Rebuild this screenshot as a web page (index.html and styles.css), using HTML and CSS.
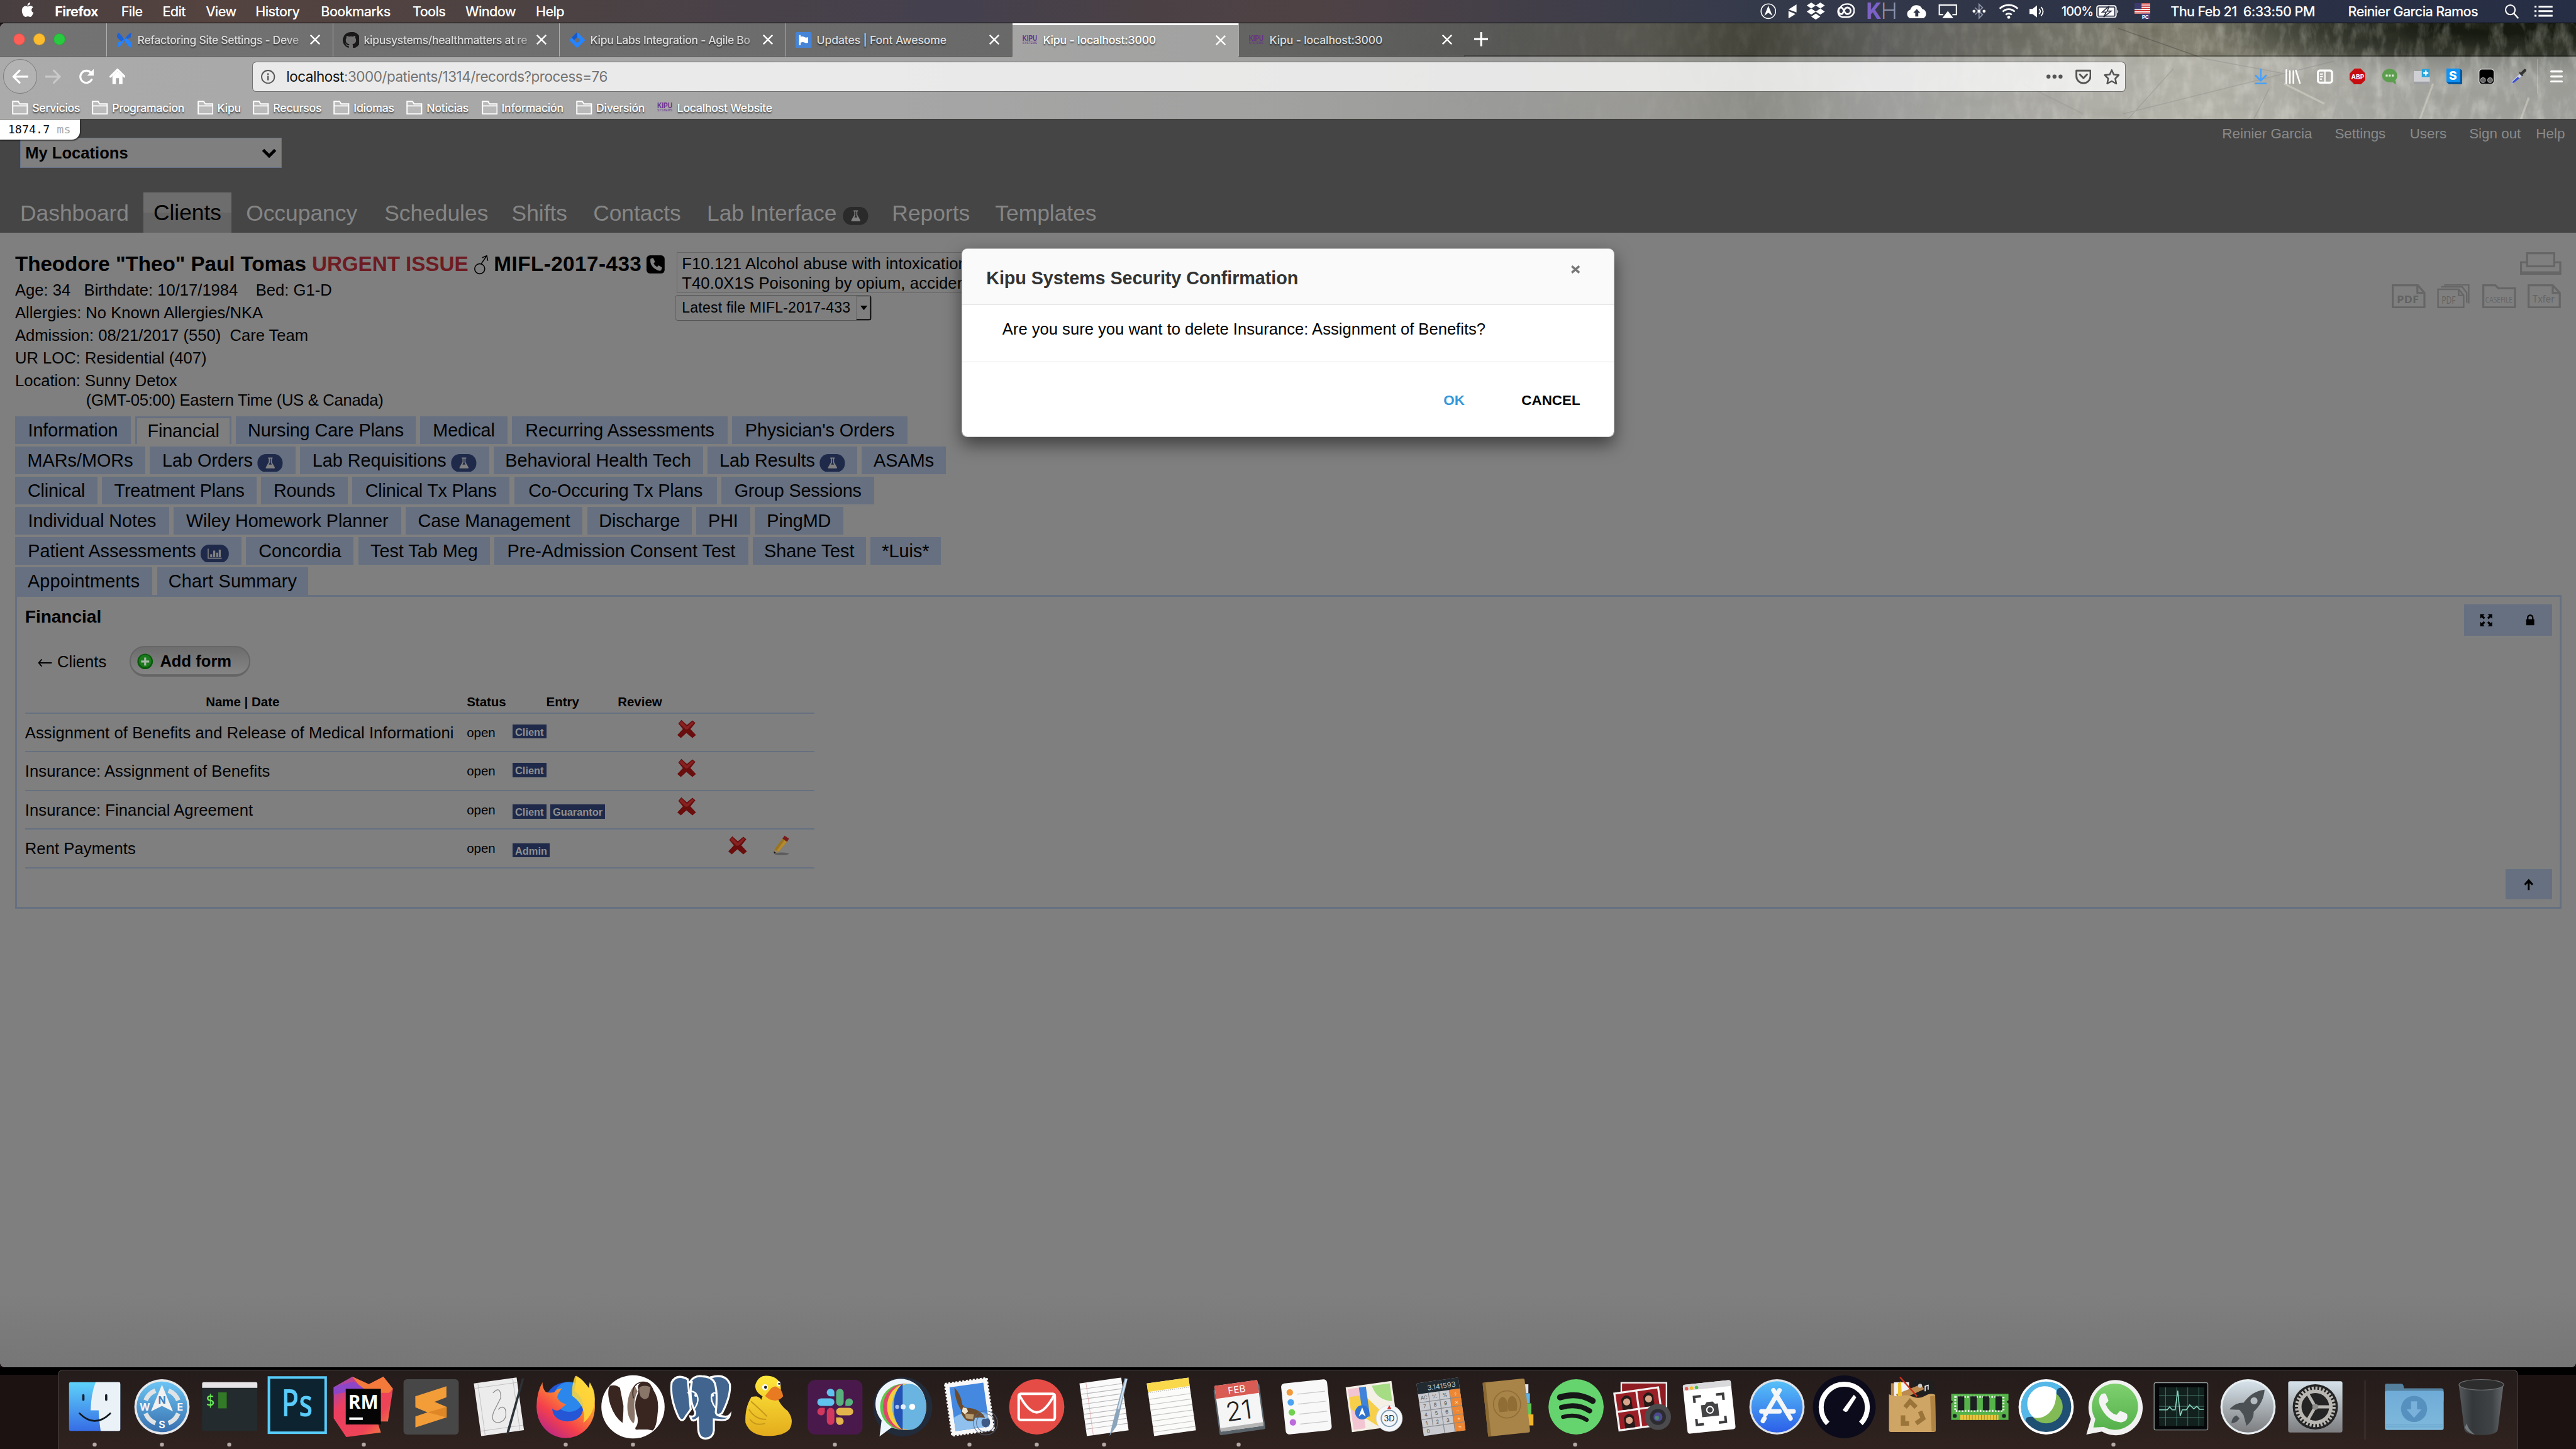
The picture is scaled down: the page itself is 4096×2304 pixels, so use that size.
FILE: index.html
```html
<!DOCTYPE html>
<html lang="en">
<head>
<meta charset="utf-8">
<title>Kipu - localhost:3000</title>
<link rel="stylesheet" href="styles.css">
</head>
<body>
<div class="menubar">
  <div class="menus">
    <svg class="apple" viewBox="0 0 24 30"><path d="M17 0c.3 3-2.500 6.400-5.500 6.300C11.200 3.300 14 .300 17 0zM12.300 8c1.400 0 2.800-1.300 5.200-1.300 2 0 4 1.100 5.200 2.900-4.500 2.600-3.800 8.700.9 10.500-1 3.400-3.700 8.600-6.500 8.600-1.900 0-2.500-1.200-4.700-1.200-2.200 0-3 1.200-4.700 1.200C4.300 28.700.5 22 .5 16.400.5 10.600 4.200 7 7.800 7c2 0 3.400 1 4.500 1z" fill="#fff"/></svg>
    <b>Firefox</b><span>File</span><span>Edit</span><span>View</span><span>History</span><span>Bookmarks</span><span>Tools</span><span>Window</span><span>Help</span>
  </div>
  <div class="status">
    <svg class="i32" viewBox="0 0 32 32"><circle cx="16" cy="16" r="14.500" fill="none" stroke="#fff" stroke-width="2"/><path d="M16 5l8 20-8-6-8 6z" fill="#fff"/></svg>
    <svg class="i18" viewBox="0 0 18 28"><path d="M17 0v16L1 10zM1 13l14 6L1 28z" fill="#fff"/></svg>
    <svg class="i38" viewBox="0 0 38 34"><path d="M10 0l9 6-9 6-9-6zM28 0l9 6-9 6-9-6zM10 12l9 6-9 6-9-6zM28 12l9 6-9 6-9-6zM19 22l9 6-9 6-9-6z" fill="#fff"/></svg>
    <svg class="i38" viewBox="0 0 38 30"><path d="M14 27a11 11 0 0 1-3-20C14 2 20 1 25 1a12 12 0 0 1 0 26z" fill="none" stroke="#fff" stroke-width="3"/><path d="M24 21c-6 0-7-14-13-13-6 2-6 13 2 13 4 0 4-13 11-13 9 0 9 13 0 13" fill="none" stroke="#fff" stroke-width="3.500"/></svg>
    <span class="kh"><b>K</b><i>H</i></span>
    <svg class="cloud" viewBox="0 0 42 28"><path d="M10 28a9 9 0 0 1-2-17.500A13 13 0 0 1 32 9a10 10 0 0 1 1 19z" fill="#fff"/><path d="M21 9l7 8h-4v7h-6v-7h-4z" fill="#31374b"/></svg>
    <svg class="i38" viewBox="0 0 38 28"><path d="M10 21H2V2h34v19h-8" fill="none" stroke="#fff" stroke-width="2.500"/><path d="M19 14l11 14H8z" fill="#fff"/></svg>
    <svg class="i32" viewBox="0 0 32 32"><path d="M8 9l15 14-7 7V2l7 7L8 23" fill="none" stroke="#8d93a5" stroke-width="2.200"/><circle cx="6" cy="16" r="3" fill="#fff"/><circle cx="16" cy="16" r="3" fill="#fff"/><circle cx="26" cy="16" r="3" fill="#fff"/></svg>
    <svg class="i40" viewBox="0 0 40 30"><path d="M2 10a26 26 0 0 1 36 0M8 16a17 17 0 0 1 24 0M14 22a9 9 0 0 1 12 0" fill="none" stroke="#fff" stroke-width="3.500"/><circle cx="20" cy="27" r="3" fill="#fff"/></svg>
    <svg class="i28" viewBox="0 0 28 26"><path d="M0 8h6l9-7v24l-9-7H0z" fill="#fff"/><path d="M19 8q5 5 0 10M23 4q8 9 0 18" fill="none" stroke="#fff" stroke-width="2.200"/></svg>
    <span class="pct">100%</span>
    <svg class="batt" viewBox="0 0 46 26"><rect x="1.500" y="1.500" width="38" height="23" rx="4" fill="none" stroke="#fff" stroke-width="2.500"/><rect x="5" y="5" width="31" height="16" fill="#fff"/><path d="M26 2L12 14h8l-5 10 15-12h-8z" fill="#fff" stroke="#2c3245" stroke-width="2"/><path d="M42 9q4 4 0 8z" fill="#fff"/></svg>
    <svg class="i32" viewBox="0 0 32 32"><path d="M0 0h32v21H0z" fill="#fff"/><path d="M0 1.500h32M0 6h32M0 10.500h32M0 15h32M0 19.500h32" stroke="#c8302e" stroke-width="2.400"/><path d="M0 0h14v12H0z" fill="#3c3b6e"/><path d="M14 21h18v11H14z" fill="#443f80"/><text x="15" y="31" font-size="10" font-weight="700" fill="#fff" font-family="Inter, sans-serif">PC</text></svg>
    <span>Thu Feb 21&nbsp; 6:33:50 PM</span><span class="user">Reinier Garcia Ramos</span>
    <svg class="i30" viewBox="0 0 30 30"><circle cx="12" cy="12" r="9.500" fill="none" stroke="#fff" stroke-width="2.600"/><path d="M19 19l9 10" stroke="#fff" stroke-width="3"/></svg>
    <svg class="i36" viewBox="0 0 36 22"><path d="M8 2h28M8 11h28M8 20h28" stroke="#fff" stroke-width="3.600"/><path d="M0 2h4M0 11h4M0 20h4" stroke="#fff" stroke-width="3.600"/></svg>
  </div>
</div>

<div class="window">
  <div class="chrome">
    <svg class="scratches" preserveAspectRatio="none" viewBox="0 0 2400 192">
      <defs>
        <filter id="grain" x="0" y="0" width="1" height="1"><feTurbulence type="fractalNoise" baseFrequency="0.05 0.02" numOctaves="5" seed="11"/><feColorMatrix values="0 0 0 0 .82  0 0 0 0 .81  0 0 0 0 .72  2.200 0 0 0 -.95"/></filter>
        <filter id="soot" x="0" y="0" width="1" height="1"><feTurbulence type="fractalNoise" baseFrequency="0.012 0.03" numOctaves="5" seed="4"/><feColorMatrix values="0 0 0 0 .08  0 0 0 0 .08  0 0 0 0 .05  2.200 0 0 0 -1"/></filter>
        <linearGradient id="fadeIn"><stop offset="0" stop-color="#000"/><stop offset=".45" stop-color="#333"/><stop offset=".65" stop-color="#888"/><stop offset="1" stop-color="#999"/></linearGradient>
        <mask id="edge"><rect width="2400" height="192" fill="url(#fadeIn)"/></mask>
      </defs>
      <g mask="url(#edge)"><rect width="2400" height="192" filter="url(#grain)" opacity=".55"/><rect width="2400" height="192" filter="url(#soot)" opacity=".6"/>
      <path d="M1490 10l170 60 160 30M1500 180l180-45 240-60M1300 120l120 60M1760 190l30-60M1600 90l-90 100" fill="none" stroke="#222" stroke-opacity=".5" stroke-width="2"/><path d="M2090 190l26-70M2290 192l16-44M1900 160l-80-40" fill="none" stroke="#e8e4cc" stroke-opacity=".6" stroke-width="4"/></g>
    </svg>
    <div class="tabstrip">
      <div class="lights"><i class="red"></i><i class="amber"></i><i class="green"></i></div>
      <div class="tab"><svg class="i32" viewBox="0 0 32 32"><path d="M3 1q6 2 13 15l-4 4Q2 12 1 9zM30 1L28 12q-6 0-14 8l2-4q6-12 14-15z" fill="#1d62d8"/><path d="M29 31q-6-2-13-15l4-4q10 8 11 11zM2 31l2-11q6 0 14-8l-2 4Q10 28 2 31z" fill="#2684ff"/></svg><span class="fade">Refactoring Site Settings - Deve</span><svg class="x" viewBox="0 0 20 20"><path d="M1 1l18 18M19 1L1 19"/></svg></div>
      <div class="tab"><svg class="i32" viewBox="0 0 32 32"><path d="M16 0a16 16 0 0 0-5 31.200c.8.100 1-.3 1-.8v-3c-4.500 1-5.400-2-5.400-2-.7-1.800-2-2.500-2-2.500 1.500-.4 2.800 1 3.200 1.800 1.400 2.400 3.600 1.700 4.500 1.300.1-1 .5-1.700 1-2.100-3.600-.4-7.300-1.800-7.300-8 0-1.700.6-3.200 1.600-4.300-.2-.4-.7-2 .2-4.200 0 0 1.300-.4 4.400 1.600a15 15 0 0 1 8 0c3-2 4.400-1.600 4.400-1.600.9 2.200.3 3.800.2 4.200 1 1.100 1.600 2.600 1.600 4.300 0 6.200-3.700 7.600-7.300 8 .6.500 1.100 1.500 1.100 3v4.400c0 .5.300.9 1 .8A16 16 0 0 0 16 0z" fill="#191717"/></svg><span class="fade">kipusystems/healthmatters at re</span><svg class="x" viewBox="0 0 20 20"><path d="M1 1l18 18M19 1L1 19"/></svg></div>
      <div class="tab"><svg class="i32" viewBox="0 0 32 32"><path d="M16 0l16 16-16 16L0 16zM16 10l-6 6 6 6 6-6z" fill="#2684ff" fill-rule="evenodd"/><path d="M16 0v10l-6 6-5-5z" fill="#1558cc"/></svg><span class="fade">Kipu Labs Integration - Agile Bo</span><svg class="x" viewBox="0 0 20 20"><path d="M1 1l18 18M19 1L1 19"/></svg></div>
      <div class="tab"><svg class="i32" viewBox="0 0 32 32"><rect width="32" height="32" rx="3" fill="#4684d8"/><path d="M7 6h3v20H7zM10 9q5-1 8 1t7 0v11q-4 2-7 0t-8 0z" fill="#fff"/></svg><span>Updates | Font Awesome</span><svg class="x" viewBox="0 0 20 20"><path d="M1 1l18 18M19 1L1 19"/></svg></div>
      <div class="tab active"><svg class="i32 kipu" viewBox="0 0 32 32"><text x="1" y="17" textLength="29" lengthAdjust="spacingAndGlyphs" class="k1">KIPU</text><text x="1" y="24" textLength="29" lengthAdjust="spacingAndGlyphs" class="k2">SYSTEMS</text></svg><span>Kipu - localhost:3000</span><svg class="x" viewBox="0 0 20 20"><path d="M1 1l18 18M19 1L1 19"/></svg></div>
      <div class="tab"><svg class="i32 kipu" viewBox="0 0 32 32"><text x="1" y="17" textLength="29" lengthAdjust="spacingAndGlyphs" class="k1">KIPU</text><text x="1" y="24" textLength="29" lengthAdjust="spacingAndGlyphs" class="k2">SYSTEMS</text></svg><span>Kipu - localhost:3000</span><svg class="x" viewBox="0 0 20 20"><path d="M1 1l18 18M19 1L1 19"/></svg></div>
      <svg class="plus" viewBox="0 0 28 28"><path d="M14 0v28M0 14h28" stroke="#fff" stroke-width="4"/></svg>
    </div>
    <div class="toolbar">
      <div class="back"><svg class="i32" viewBox="0 0 32 32"><path d="M31 16H3M15 4L3 16l12 12" fill="none" stroke="#fff" stroke-width="4" stroke-linecap="round" stroke-linejoin="round"/></svg></div>
      <svg class="i32 fwd" viewBox="0 0 32 32"><path d="M1 16h28M17 4l12 12-12 12" fill="none" stroke="#c9c9c9" stroke-width="4" stroke-linecap="round" stroke-linejoin="round"/></svg>
      <svg class="i32 reload" viewBox="0 0 32 32"><path d="M26 22a12 12 0 1 1-1-13" fill="none" stroke="#fff" stroke-width="4" stroke-linecap="round"/><path d="M30 1v13H17z" fill="#fff"/></svg>
      <svg class="i32 home" viewBox="0 0 32 32"><path d="M2 16L16 2l14 14" fill="none" stroke="#fff" stroke-width="4" stroke-linecap="round" stroke-linejoin="round"/><path d="M6 15L16 5l10 10v16H6z" fill="#fff"/><path d="M13 31V19h6v12" fill="#a6a6a6"/></svg>
      <div class="url">
        <svg class="i28" viewBox="0 0 28 28"><circle cx="14" cy="14" r="12.700" fill="none" stroke="#555" stroke-width="2.400"/><path d="M14 12v9M14 7v3" stroke="#555" stroke-width="2.800"/></svg>
        <span>localhost<em>:3000/patients/1314/records?process=76</em></span>
        <svg class="i32 dots" viewBox="0 0 32 32"><circle cx="4" cy="16" r="4"/><circle cx="16" cy="16" r="4"/><circle cx="28" cy="16" r="4"/></svg>
        <svg class="i32 pocket" viewBox="0 0 32 32"><path d="M2 4h28v11a14 14 0 0 1-28 0zM9 12l7 7 7-7" fill="none" stroke="#555" stroke-width="3.600" stroke-linejoin="round" stroke-linecap="round"/></svg>
        <svg class="i32 star" viewBox="0 0 32 32"><path d="M16 3l4 9 10 1-7 7 2 10-9-5-9 5 2-10-7-7 10-1z" fill="none" stroke="#555" stroke-width="3.200" stroke-linejoin="round"/></svg>
      </div>
      <div class="addons">
        <svg class="i32" viewBox="0 0 32 32"><path d="M16 1v22M6 14l10 10 10-10" fill="none" stroke="#45a1ff" stroke-width="3.400" stroke-linecap="round" stroke-linejoin="round"/><path d="M6 30h20" stroke="#45a1ff" stroke-width="4" stroke-linecap="round"/></svg>
        <svg class="i32" viewBox="0 0 32 32"><path d="M3 3v26M10 5v24M17 5v24M22 4l8 25" stroke="#fff" stroke-width="3.200" stroke-linecap="round"/></svg>
        <svg class="i32" viewBox="0 0 32 32"><rect x="2" y="4" width="28" height="24" rx="4" fill="none" stroke="#fff" stroke-width="4"/><path d="M16 4v24M6 11h6M6 16h6M6 21h4" stroke="#fff" stroke-width="2.500"/></svg>
        <svg class="i32" viewBox="0 0 32 32"><path d="M10 0h12l10 10v12L22 32H10L0 22V10z" fill="#c70d10"/><text x="3" y="21" textLength="26" lengthAdjust="spacingAndGlyphs" font-size="13" font-weight="700" fill="#fff" font-family="Inter, sans-serif">ABP</text></svg>
        <svg class="i32" viewBox="0 0 32 32"><ellipse cx="16" cy="14" rx="15" ry="13.500" fill="#5b9e4d"/><path d="M18 24h10v8z" fill="#5b9e4d"/><path d="M8 14h4M14 14h4M20 14h4" stroke="#dfe8da" stroke-width="4"/></svg>
        <svg class="i32" viewBox="0 0 32 32"><path d="M0 5h32v27H0z" fill="#cfd0d4"/><path d="M0 26h32v6H0z" fill="#9fa0a6"/><path d="M16 1h16v16H16z" fill="#2ba3dc"/><path d="M24 4v10M19 9h10" stroke="#fff" stroke-width="3"/></svg>
        <svg class="i32" viewBox="0 0 32 32"><path d="M0 0h26l6 4v28H6l-6-5z" fill="#0057a0"/><path d="M0 0h27v27H0z" fill="#0f93f5"/><text x="5" y="22" font-size="24" font-weight="800" fill="#fff" font-family="Inter, sans-serif">S</text></svg>
        <svg class="i32" viewBox="0 0 32 32"><rect x="1" y="1" width="30" height="30" rx="6" fill="#000" stroke="#ddd" stroke-width="1.500"/><circle cx="9" cy="23" r="5" fill="#666" stroke="#ccc"/><circle cx="23" cy="23" r="5" fill="#666" stroke="#ccc"/></svg>
        <svg class="i32" viewBox="0 0 32 32"><path d="M20 8l7-7q5-1 4 4l-7 7 1 3-4-1-4-5 1-3z" fill="#333"/><path d="M18 11l4 4L7 28l-5 2 2-6z" fill="#c9d2ee"/><path d="M14 17l4 2-11 9-4 1 2-4z" fill="#3c4fd0"/></svg>
      </div>
      <i class="bar"></i>
      <svg class="burger" viewBox="0 0 25 24"><path d="M2 2h21M2 12h21M2 22h21" stroke="#fff" stroke-width="4" stroke-linecap="round"/></svg>
    </div>
    <div class="bookmarks">
      <span><svg class="i32" viewBox="0 0 32 28"><path d="M1.500 26.500v-25h11l3 5h15v20zM1.500 10.500h29" class="fold"/></svg>Servicios</span>
      <span><svg class="i32" viewBox="0 0 32 28"><path d="M1.500 26.500v-25h11l3 5h15v20zM1.500 10.500h29" class="fold"/></svg>Programacion</span>
      <span><svg class="i32" viewBox="0 0 32 28"><path d="M1.500 26.500v-25h11l3 5h15v20zM1.500 10.500h29" class="fold"/></svg>Kipu</span>
      <span><svg class="i32" viewBox="0 0 32 28"><path d="M1.500 26.500v-25h11l3 5h15v20zM1.500 10.500h29" class="fold"/></svg>Recursos</span>
      <span><svg class="i32" viewBox="0 0 32 28"><path d="M1.500 26.500v-25h11l3 5h15v20zM1.500 10.500h29" class="fold"/></svg>Idiomas</span>
      <span><svg class="i32" viewBox="0 0 32 28"><path d="M1.500 26.500v-25h11l3 5h15v20zM1.500 10.500h29" class="fold"/></svg>Noticias</span>
      <span><svg class="i32" viewBox="0 0 32 28"><path d="M1.500 26.500v-25h11l3 5h15v20zM1.500 10.500h29" class="fold"/></svg>Información</span>
      <span><svg class="i32" viewBox="0 0 32 28"><path d="M1.500 26.500v-25h11l3 5h15v20zM1.500 10.500h29" class="fold"/></svg>Diversión</span>
      <span><svg class="i32 kipu" viewBox="0 0 32 32"><text x="0" y="17" textLength="30" lengthAdjust="spacingAndGlyphs" class="k1">KIPU</text><text x="0" y="24" textLength="30" lengthAdjust="spacingAndGlyphs" class="k2">SYSTEMS</text></svg>Localhost Website</span>
    </div>
  </div>

  <div class="page">
    <div class="profiler">1874.7 <span>ms</span></div>
    <header class="masthead">
      <div class="locations">My Locations<svg class="chev" viewBox="0 0 30 19"><path d="M3 3l12 12L27 3" fill="none" stroke="#000" stroke-width="6"/></svg></div>
      <div class="account"><span>Reinier Garcia</span><span>Settings</span><span>Users</span><span>Sign out</span><span>Help</span></div>
      <nav class="nav"><span>Dashboard</span><span class="on">Clients</span><span>Occupancy</span><span>Schedules</span><span>Shifts</span><span>Contacts</span><span>Lab Interface<svg class="pill dark" viewBox="0 0 50 36"><rect width="50" height="36" rx="17" fill="#2a2a2a"/><path d="M21 7h9v2h-1.500v7l6 10.500q.5 2-1.500 2H18q-2 0-1.500-2l6-10.500V9H21z" fill="#808080"/><path d="M24.500 9h2v8l2 4h-6l2-4z" fill="#2a2a2a"/></svg></span><span>Reports</span><span>Templates</span></nav>
    </header>

    <section class="patient">
      <div class="facts">
        <h1><span class="name">Theodore "Theo" Paul Tomas </span><em>URGENT ISSUE</em><svg class="mars" viewBox="0 0 28 40"><circle cx="11" cy="28" r="10" fill="none" stroke="#000" stroke-width="2"/><path d="M14 18L25 2M16 6l9-4 2 10" fill="none" stroke="#000" stroke-width="2"/></svg><span class="mr">MIFL-2017-433</span><svg class="phone" viewBox="0 0 36 36"><rect width="36" height="36" rx="7"/><path d="M8 7l5-2 4 8-3 3q2 5 7 7l3-3 7 4-2 6q-5 2-12-3T8 15q-1-5 0-8z" fill="#7f7f7f"/></svg></h1>
        <p>Age: 34 &nbsp; Birthdate: 10/17/1984 &nbsp;&nbsp; Bed: G1-D</p>
        <p>Allergies: No Known Allergies/NKA</p>
        <p>Admission: 08/21/2017 (550) &nbsp;Care Team</p>
        <p class="ur">UR LOC: Residential (407)</p>
        <p>Location: Sunny Detox</p>
        <p class="tz">(GMT-05:00) Eastern Time (US &amp; Canada)</p>
      </div>
      <div class="codes">
        <div class="diag">F10.121 Alcohol abuse with intoxication<br>T40.0X1S Poisoning by opium, accidental</div>
        <div class="files"><span>Latest file MIFL-2017-433</span><i><svg viewBox="0 0 14 9"><path d="M0 0h14L7 9z"/></svg></i></div>
      </div>
      <div class="prints">
        <svg class="printer" viewBox="0 0 82 45"><path d="M14 2h54v26H14zM14 20H2v23h78V20H68" fill="none" stroke="#666" stroke-width="4"/><path d="M2 38h78v5H2z" fill="#666"/></svg>
        <div class="docs">
          <svg viewBox="0 0 67 48"><path d="M2 2h50l13 15v29H2zM51 2v15h14" fill="none" stroke="#666" stroke-width="4"/><text x="10" y="38" class="dt" textLength="44" lengthAdjust="spacingAndGlyphs" font-weight="700">PDF</text></svg>
          <svg viewBox="0 0 67 48"><path d="M2 10h41l10 12v24H2zM43 10v12h10M8 5h42l9 12v20M14 1h49v37" fill="none" stroke="#666" stroke-width="3"/><text x="9" y="39" class="dt" textLength="28" lengthAdjust="spacingAndGlyphs">PDF</text></svg>
          <svg viewBox="0 0 67 48"><path d="M2 46V2h24l6 6h33v38z" fill="none" stroke="#666" stroke-width="4"/><text x="6" y="36" class="dt sm" textLength="54" lengthAdjust="spacingAndGlyphs">CASEFILE</text></svg>
          <svg viewBox="0 0 67 48"><path d="M2 2h48l14 15v29H2zM50 2v15h14" fill="none" stroke="#666" stroke-width="4"/><text x="10" y="36" class="dt" textLength="44" lengthAdjust="spacingAndGlyphs">Txfer</text></svg>
        </div>
      </div>
    </section>

    <nav class="tabs">
      <div class="r1"><span>Information</span><span class="sel">Financial</span><span>Nursing Care Plans</span><span>Medical</span><span>Recurring Assessments</span><span>Physician's Orders</span></div>
      <div class="r2"><span>MARs/MORs</span><span>Lab Orders<svg class="pill" viewBox="0 0 50 36"><rect width="50" height="36" rx="17" fill="#1f2a4b"/><path d="M21 7h9v2h-1.500v7l6 10.500q.5 2-1.500 2H18q-2 0-1.500-2l6-10.500V9H21z" fill="#808080"/><path d="M24.500 9h2v8l2 4h-6l2-4z" fill="#1f2a4b"/></svg></span><span>Lab Requisitions<svg class="pill" viewBox="0 0 50 36"><rect width="50" height="36" rx="17" fill="#1f2a4b"/><path d="M21 7h9v2h-1.500v7l6 10.500q.5 2-1.500 2H18q-2 0-1.500-2l6-10.500V9H21z" fill="#808080"/><path d="M24.500 9h2v8l2 4h-6l2-4z" fill="#1f2a4b"/></svg></span><span>Behavioral Health Tech</span><span>Lab Results<svg class="pill" viewBox="0 0 50 36"><rect width="50" height="36" rx="17" fill="#1f2a4b"/><path d="M21 7h9v2h-1.500v7l6 10.500q.5 2-1.500 2H18q-2 0-1.500-2l6-10.500V9H21z" fill="#808080"/><path d="M24.500 9h2v8l2 4h-6l2-4z" fill="#1f2a4b"/></svg></span><span>ASAMs</span></div>
      <div class="r3"><span>Clinical</span><span>Treatment Plans</span><span>Rounds</span><span>Clinical Tx Plans</span><span>Co-Occuring Tx Plans</span><span>Group Sessions</span></div>
      <div class="r4"><span>Individual Notes</span><span>Wiley Homework Planner</span><span>Case Management</span><span>Discharge</span><span>PHI</span><span>PingMD</span></div>
      <div class="r5"><span>Patient Assessments<svg class="pill wide" viewBox="0 0 56 36"><rect width="56" height="36" rx="17" fill="#1f2a4b"/><path d="M15 8v19h27" fill="none" stroke="#808080" stroke-width="2"/><path d="M21 25v-6M27 25V12M33 25V16M38 25V10" stroke="#808080" stroke-width="4"/></svg></span><span>Concordia</span><span>Test Tab Meg</span><span>Pre-Admission Consent Test</span><span>Shane Test</span><span>*Luis*</span></div>
      <div class="r6"><span>Appointments</span><span>Chart Summary</span></div>
    </nav>

    <section class="panel">
      <div class="phead"><h2>Financial</h2>
        <div class="tools"><svg viewBox="0 0 28 28"><path d="M2 2h9L8 5l4 4-3 3-4-4-3 3zM26 2v9l-3-3-4 4-3-3 4-4-3-3zM2 26v-9l3 3 4-4 3 3-4 4 3 3zM26 26h-9l3-3-4-4 3-3 4 4 3-3z"/></svg><svg viewBox="0 0 28 28"><path d="M6 12h16v12H6z"/><path d="M9 13V9a5 5 0 0 1 10 0v4" fill="none" stroke="#000" stroke-width="3"/></svg></div></div>
      <div class="actions"><svg class="larr" viewBox="0 0 29 20"><path d="M28 10H2M8 3l-6 7 6 7" fill="none" stroke="#000" stroke-width="2.200"/></svg><span>Clients</span>
        <div class="add"><svg viewBox="0 0 32 32"><circle cx="16" cy="16" r="15.500" fill="#085a0a"/><circle cx="16" cy="15" r="12.500" fill="#1a7a1c"/><path d="M16 8v16M8 16h16" stroke="#a9b8a9" stroke-width="4"/></svg>Add form</div></div>
      <div class="grid">
        <div class="row head"><span class="n">Name | Date</span><span>Status</span><span>Entry</span><span>Review</span></div>
        <div class="row"><span class="n">Assignment of Benefits and Release of Medical Informationi</span><span>open</span><span class="tags up"><b>Client</b></span><span><svg class="del" viewBox="0 0 37 38"><path d="M8 1l11 10L30 2l6 5-10 12 11 12-7 6-12-10L7 37l-7-6 11-12L2 8z" fill="#6a0d0d"/><path d="M8 3l11 11L30 4l3 3-12 12-4 1L4 8z" fill="#862222"/></svg></span></div>
        <div class="row"><span class="n">Insurance: Assignment of Benefits</span><span>open</span><span class="tags up"><b>Client</b></span><span><svg class="del" viewBox="0 0 37 38"><path d="M8 1l11 10L30 2l6 5-10 12 11 12-7 6-12-10L7 37l-7-6 11-12L2 8z" fill="#6a0d0d"/><path d="M8 3l11 11L30 4l3 3-12 12-4 1L4 8z" fill="#862222"/></svg></span></div>
        <div class="row"><span class="n">Insurance: Financial Agreement</span><span>open</span><span class="tags"><b>Client</b><b>Guarantor</b></span><span><svg class="del" viewBox="0 0 37 38"><path d="M8 1l11 10L30 2l6 5-10 12 11 12-7 6-12-10L7 37l-7-6 11-12L2 8z" fill="#6a0d0d"/><path d="M8 3l11 11L30 4l3 3-12 12-4 1L4 8z" fill="#862222"/></svg></span></div>
        <div class="row"><span class="n">Rent Payments</span><span>open</span><span class="tags"><b>Admin</b></span><span></span><span><svg class="del" viewBox="0 0 37 38"><path d="M8 1l11 10L30 2l6 5-10 12 11 12-7 6-12-10L7 37l-7-6 11-12L2 8z" fill="#6a0d0d"/><path d="M8 3l11 11L30 4l3 3-12 12-4 1L4 8z" fill="#862222"/></svg></span><span><svg class="pencil" viewBox="0 0 34 40"><ellipse cx="17" cy="37" rx="15" ry="2.500" fill="#5c5c5c"/><path d="M3 28L19 7l9 6L11 33l-9 3z" fill="#9a7420"/><path d="M8 30L23 10l5 3-17 20z" fill="#b48a30"/><path d="M19 7l4-6 9 6-4 6z" fill="#7a1a1a"/><path d="M3 28l8 5-9 3z" fill="#8f8268"/><path d="M2 32l4 3-4 1z" fill="#111"/></svg></span></div>
      </div>
      <div class="pfoot"><i class="up-btn"><svg viewBox="0 0 24 28"><path d="M12 2l10 11-3 3-5-5v15h-4V11l-5 5-3-3z"/></svg></i></div>
    </section>
  </div>

  <div class="modal">
    <div class="mh"><b>Kipu Systems Security Confirmation</b><svg viewBox="0 0 18 16"><path d="M1.500 1.500l15 13M16.500 1.500l-15 13" stroke="#777" stroke-width="4.500"/></svg></div>
    <div class="mb">Are you sure you want to delete Insurance: Assignment of Benefits?</div>
    <div class="mf"><b class="ok">OK</b><b>CANCEL</b></div>
  </div>
</div>

<div class="dock">
<svg width="0" height="0" class="defs"><defs>
<linearGradient id="gFinder" x2="0" y2="1"><stop stop-color="#5ed2f9"/><stop offset="1" stop-color="#366de6"/></linearGradient>
<linearGradient id="gBlue" x2="0" y2="1"><stop stop-color="#6cc5f4"/><stop offset="1" stop-color="#386fae"/></linearGradient>
<linearGradient id="gStore" x2="0" y2="1"><stop stop-color="#57c0f8"/><stop offset="1" stop-color="#2c5fe8"/></linearGradient>
<linearGradient id="gSilver" x2="0" y2="1"><stop stop-color="#d6e2ea"/><stop offset="1" stop-color="#7c7d7f"/></linearGradient>
<linearGradient id="gFire" x1=".9" x2=".2" y2="1"><stop stop-color="#fff04c"/><stop offset=".35" stop-color="#fd9a2c"/><stop offset=".7" stop-color="#f5404c"/><stop offset="1" stop-color="#b5258c"/></linearGradient>
<linearGradient id="gRm" x2="1" y2="1"><stop stop-color="#7a4cd8"/><stop offset=".3" stop-color="#ec3e60"/><stop offset=".7" stop-color="#ee4456"/><stop offset="1" stop-color="#f59a35"/></linearGradient>
<linearGradient id="gDuck" x2="0" y2="1"><stop stop-color="#ffe83c"/><stop offset="1" stop-color="#e3ac1c"/></linearGradient>
<linearGradient id="gFolder" x2="0" y2="1"><stop stop-color="#6fabd7"/><stop offset="1" stop-color="#7fb9dc"/></linearGradient>
<linearGradient id="gBin"><stop stop-color="#565a5d"/><stop offset=".3" stop-color="#35383a"/><stop offset=".75" stop-color="#404345"/><stop offset="1" stop-color="#65696b"/></linearGradient>
<linearGradient id="gWa" x2="0" y2="1"><stop stop-color="#7fd06f"/><stop offset="1" stop-color="#55b14c"/></linearGradient>
</defs></svg>
<svg class="app" viewBox="0 0 134 158"><rect x="16" y="26" width="102" height="97" rx="3" fill="url(#gFinder)"/><path d="M69 26h46q3 0 3 3v91q0 3-3 3H79q-3-18-4-41H59q1-34 10-56z" fill="#eaf2f8"/><path d="M44.500 52v9M90 52v9" stroke="#14202c" stroke-width="4.500" stroke-linecap="round"/><path d="M37 88q30 30 61 0" fill="none" stroke="#10191f" stroke-width="3.500" stroke-linecap="round"/><circle cx="67" cy="150" r="4" class="run"/></svg>
<svg class="app" viewBox="0 0 134 158"><circle cx="67" cy="75" r="55" fill="#e6e8ea"/><circle cx="67" cy="75" r="50.500" fill="url(#gBlue)"/><g fill="none" stroke="#dfe3e6" stroke-width="9"><path d="M80 42.500a35 35 0 0 1 19.500 19.500M99.500 88a35 35 0 0 1-19.500 19.500M54 107.500A35 35 0 0 1 34.500 88M34.500 62A35 35 0 0 1 54 42.500"/></g><path d="M67 31l22 53-22-11-22 11z" fill="#f1f1f1"/><g font-family="Inter, sans-serif" font-weight="700" font-size="20" fill="#f4f4f4" text-anchor="middle"><text x="67" y="69" fill="#3f7fbe">N</text><text x="33" y="83">W</text><text x="103" y="83">E</text><text x="67" y="117">S</text></g><circle cx="67" cy="150" r="4" class="run"/></svg>
<svg class="app" viewBox="0 0 134 158"><rect x="13" y="26" width="110" height="97" rx="4" fill="#232b2e"/><path d="M13 37v-8q0-3 3-3h104q3 0 3 3v8z" fill="#e6e4e6"/><rect x="45" y="46" width="17" height="32" fill="#327a28"/><text x="20" y="73" font-size="30" fill="#6df05a" font-family="DejaVu Sans Mono, monospace">$</text><circle cx="67" cy="150" r="4" class="run"/></svg>
<svg class="app" viewBox="0 0 134 158"><rect x="12" y="16.500" width="113" height="110" fill="#0d2430" stroke="#58cbf9" stroke-width="5"/><text x="37" y="94" font-size="74" textLength="62" lengthAdjust="spacingAndGlyphs" fill="#5accfa" font-family="Open Sans, sans-serif" font-weight="600">Ps</text></svg>
<svg class="app" viewBox="0 0 134 158"><path d="M7 36l37-21 33 15 29-15 19 24-10 65H94l7 22-69 9L7 98z" fill="url(#gRm)"/><path d="M44 15l33 15 29-15 19 24-8 8H70z" fill="#f47a3c"/><path d="M7 36l40-12 30 22H31l-24 4z" fill="#8e46c8"/><path d="M31 39h70v71H31z" fill="#050505"/><text x="36" y="79" font-size="38" font-weight="700" textLength="60" lengthAdjust="spacingAndGlyphs" fill="#fff" font-family="Open Sans, sans-serif">RM</text><path d="M38 96h27v5H38z" fill="#fff"/><circle cx="67" cy="150" r="4" class="run"/></svg>
<svg class="app" viewBox="0 0 134 158"><rect x="12" y="20" width="110" height="110" rx="7" fill="#474747"/><path d="M35.500 54l62-20v22L74 65l23.700 10v21l-62 20V94l24-8-24-10z" fill="#f29d38"/><path d="M60 86l38-11v21z" fill="#df8726"/></svg>
<svg class="app" viewBox="0 0 134 158"><g transform="rotate(-8 67 75)"><rect x="25" y="22" width="86" height="106" fill="#ececec"/><path d="M33 22v106M103 22v106M25 32h86M25 118h86" stroke="#b9b9b9"/><path d="M60 46q18-14 14 12L56 84q-10 20 8 22 18-2 16-24-4-10-14-2" fill="none" stroke="#888" stroke-width="1.500"/></g><path d="M114 18l4 1-30 108-5 5 1-9z" fill="#2c3338"/></svg>
<svg class="app" viewBox="0 0 134 158"><circle cx="69" cy="71" r="45" fill="#2456d6"/><circle cx="74" cy="55" r="30" fill="#2f9cf5" opacity=".7"/><path d="M21 26q-12 20-12 48a57 60 0 0 0 116 4q1-34-10-52-2 8-1 14-10-18-26-27 0 18-4 30 18 12 18 34-2 26-32 27-28-2-30-26 8 8 16 2l12-10q-14-4-18-14 2-10 10-18-10 0-16 8-14 2-18-2-6-8-5-18z" fill="url(#gFire)"/><path d="M86 13q-8 20-6 40 30 22 22 54 22-18 23-48 0-20-10-30-1 6 0 10-12-14-29-26z" fill="#ffd93b" opacity=".85"/><circle cx="67" cy="150" r="4" class="run"/></svg>
<svg class="app" viewBox="0 0 134 158"><circle cx="67" cy="75" r="63" fill="#fff"/><path d="M21 33q12-3 20 4 4 20 7 36 0 20-2 34-16-12-24-36-8-26-1-38z" fill="#3a2621"/><path d="M68 108q-14-12-12-40 2-22 14-36l6 12q-8 16-6 36 2 22-2 28z" fill="#8a7668"/><path d="M84 26q18-2 24 16 12 18 8 46-2 28-10 34l-10-2H78q-8 2-6-4 6-6 4-20-8-24-2-40 4-8 4-16-4-8 6-14z" fill="#3a2621"/><path d="M80 36q10-6 22 0l-4 20q-8 8-16-2-4-10-2-18z" fill="#8a7668"/><path d="M68 58q-6-26 14-32 14-2 20 6" fill="none" stroke="#3a2621" stroke-width="2"/><circle cx="67" cy="150" r="4" class="run"/></svg>
<svg class="app" viewBox="0 0 134 158"><g fill="#41658f" stroke="#fff" stroke-width="4"><path d="M42 20Q20 8 10 26q-4 30 12 66 8 18 16 2l10-14z"/><path d="M88 16q30-8 38 14 2 24-16 58l-12 6-12-20z"/><path d="M46 26Q54 12 70 14q20 0 26 14 6 20 2 56-2 8 14 10 10 2 14-3-2 12-20 10l-12-1v22q-2 16-17 16-13 0-14-18l-1-22q-12 10-15-4 10 2 10-8-14-28-7-60z"/></g><path d="M54 80q14-18 4-32-10-8-16 0M98 78q-12-16-8-28 6-6 10 0" fill="none" stroke="#fff" stroke-width="3"/><circle cx="58" cy="52" r="3" fill="#fff"/><circle cx="92" cy="52" r="2.500" fill="#fff"/></svg>
<svg class="app" viewBox="0 0 134 158"><path d="M64 13q24 0 29 20 2 14-6 24 6 16 20 26 14 18 4 36-12 14-44 14-34 0-44-26-2-30 12-52l10-1q12 4 8 10l4-10Q40 44 43 30q6-17 21-17z" fill="url(#gDuck)"/><path d="M74 38q8-6 12-2 10 4 12 18-8 10-20 8-10-2-16-9z" fill="#e87a22"/><circle cx="62" cy="36" r="6" fill="#fff"/><circle cx="63" cy="36" r="3" fill="#222"/><ellipse cx="89" cy="29" rx="3.500" ry="5" fill="#fff"/><circle cx="90" cy="29" r="2" fill="#222"/><path d="M34 64q18 16 32 30M30 80q12 20 34 20M32 100q10 14 30 8" fill="none" stroke="#c8981c" stroke-width="2.500"/></svg>
<svg class="app" viewBox="0 0 134 158"><rect x="13" y="21" width="109" height="109" rx="15" fill="#4a194c"/><path d="M58.500 39A7.500 7.500 0 0 1 66 46v8h-8a7.500 7.500 0 0 1 .5-15z" fill="#5fc3ee"/><rect x="32" y="58" width="34" height="15" rx="7.500" fill="#5fc3ee"/><rect x="69.500" y="39" width="15" height="34" rx="7.500" fill="#57b17d"/><path d="M88 73v-8a7.500 7.500 0 1 1 8 8z" fill="#57b17d"/><path d="M47 77v8a7.500 7.500 0 1 1-8-8z" fill="#d2375d"/><rect x="51" y="77" width="15" height="34" rx="7.500" fill="#d2375d"/><rect x="69.500" y="77" width="34" height="15" rx="7.500" fill="#e3b44c"/><path d="M69.500 96h8a7.500 7.500 0 1 1-8 8z" fill="#e3b44c"/><circle cx="67" cy="150" r="4" class="run"/></svg>
<svg class="app" viewBox="0 0 134 158"><circle cx="68" cy="75" r="59" fill="#222b3a"/><path d="M22 134l4-32a50 50 0 1 1 20 14z" fill="#eef6fd"/><circle cx="69" cy="75" r="46" fill="#5fc64c"/><ellipse cx="72" cy="75" rx="43" ry="46" fill="#e2456c"/><ellipse cx="76" cy="75" rx="39" ry="46" fill="#f4ce3d"/><ellipse cx="81" cy="75" rx="34" ry="46" fill="#69b4e0"/><path d="M68 29v92q-18-14-18-46t18-46z" fill="#2553b4"/><circle cx="57" cy="75" r="4" fill="#a8c0e8"/><circle cx="69" cy="75" r="5" fill="#e6effa"/><circle cx="87" cy="75" r="6" fill="#fff"/></svg>
<svg class="app" viewBox="0 0 134 158"><g transform="rotate(-8 67 75)"><rect x="25" y="23" width="84" height="104" fill="#f7f7f7" stroke="#f7f7f7" stroke-width="4" stroke-dasharray="4 3"/><rect x="33" y="31" width="68" height="88" fill="#4488e0"/><path d="M33 92q34-16 68 2v25H33z" fill="#8fc0ee"/></g><path d="M37 37q12 10 16 34l6 6q16 0 26 6 10 6 13 14-10-2-20 0l-2 6q-14 2-18-4-8-8-8-18-12-20-13-44z" fill="#6b4b2c"/><path d="M54 76l8 2 2 6-6 6-6-6z" fill="#f0e6d0"/><path d="M58 88l18 2-2 10-14-2z" fill="#b89c70"/><g fill="none" stroke="#56657f" stroke-width="1.600" opacity=".75"><circle cx="99" cy="107" r="24"/><circle cx="99" cy="107" r="18"/></g><path d="M99 99q8-4 9 5t-8 12q-10-2-9-12 2-7 8-5z" fill="#3d5a86"/><circle cx="67" cy="150" r="4" class="run"/></svg>
<svg class="app" viewBox="0 0 134 158"><circle cx="67" cy="75" r="55" fill="#e64c46"/><rect x="31" y="49" width="72" height="52" rx="4" fill="none" stroke="#fff" stroke-width="5"/><path d="M32 51q18 34 35 35 17-1 35-35" fill="none" stroke="#fff" stroke-width="5"/><circle cx="67" cy="150" r="4" class="run"/></svg>
<svg class="app" viewBox="0 0 134 158"><g transform="rotate(-8 67 75)"><rect x="25" y="22" width="84" height="106" fill="#fafafa"/><path d="M25 34h84M25 44h84M25 54h84M25 64h84M25 74h84M25 84h84M25 94h84M25 104h84M25 114h84" stroke="#b8b8bb" stroke-width="1.500"/><path d="M38 22v106" stroke="#e9a9a9"/></g><path d="M108 18l6 1-22 94-14 20 6-25z" fill="#8aa4bc"/><path d="M110 19l3 1-16 60-3-1z" fill="#d5e3ee"/><circle cx="67" cy="150" r="4" class="run"/></svg>
<svg class="app" viewBox="0 0 134 158"><g transform="rotate(-8 67 75)"><rect x="25" y="22" width="84" height="106" fill="#fbfbf9"/><path d="M25 22h84v17H25z" fill="#f9d84c"/><path d="M25 41h84" stroke="#999" stroke-dasharray="2 2"/><path d="M25 54h84M25 65h84M25 76h84M25 87h84M25 98h84M25 109h84M25 120h84" stroke="#c6c6c2" stroke-width="1.500"/></g></svg>
<svg class="app" viewBox="0 0 134 158"><g transform="rotate(-8 67 75)"><rect x="22" y="34" width="92" height="92" rx="3" fill="#5b646b"/><rect x="25" y="27" width="86" height="92" rx="2" fill="#f5f5f5"/><path d="M25 27h86v26H25z" fill="#d85b54"/><path d="M25 112h86v7H25z" fill="#b5b5b5"/><g font-family="Inter, sans-serif" text-anchor="middle"><text x="68" y="47" font-size="19" fill="#fff">FEB</text><text x="66" y="101" font-size="52" font-weight="300" fill="#222">21</text></g></g><circle cx="67" cy="150" r="4" class="run"/></svg>
<svg class="app" viewBox="0 0 134 158"><g transform="rotate(-6 67 75)"><rect x="22" y="24" width="92" height="102" rx="7" fill="#f8f8f8"/><g stroke="#fff"><circle cx="38" cy="43" r="7" fill="#f19a3a"/><circle cx="38" cy="63" r="7" fill="#4ba3f2"/><circle cx="38" cy="83" r="7" fill="#6fd14f"/><circle cx="38" cy="103" r="7" fill="#bb6bdc"/></g><path d="M52 48h56M52 68h56M52 88h56M52 108h56" stroke="#c8c8c8" stroke-width="1.500"/></g></svg>
<svg class="app" viewBox="0 0 134 158"><g transform="rotate(-8 60 75)"><rect x="18" y="30" width="92" height="90" fill="#f4f0e6"/><path d="M22 34h24v82H22z" fill="#f3c5d2"/><path d="M22 50h30l40 50v16H72L22 74z" fill="#f7cf4b"/><path d="M70 34h36v36q-30-6-36-36z" fill="#a5dc84"/><path d="M44 34h14v60H44z" fill="#3f83da"/></g><circle cx="45" cy="86" r="14" fill="#2f72cf"/><path d="M45 76l7 18-7-5-7 5z" fill="#fff"/><circle cx="99" cy="98" r="26" fill="#f4f7fa" stroke="#d5dbe0"/><circle cx="99" cy="98" r="16" fill="none" stroke="#7f9bb3" stroke-width="2.500"/><path d="M99 72l4 7h-8z" fill="#e0322c"/><text x="99" y="104" font-size="16" fill="#222" text-anchor="middle" font-family="Inter, sans-serif">3D</text></svg>
<svg class="app" viewBox="0 0 134 158"><g transform="rotate(-8 67 75)"><rect x="26" y="22" width="84" height="106" rx="2" fill="#c9cbd0"/><path d="M26 22h84v22H26z" fill="#202a30"/><path d="M89 44h21v84H89z" fill="#ee8733"/><path d="M26 61h84M26 78h84M26 95h84M26 111h84M47 44v67M68 44v84M89 44v84" stroke="#888b90" stroke-width="1.500"/><g font-family="Inter, sans-serif" fill="#555"><text x="46" y="39" font-size="14" fill="#bcc8cc">3.141593</text><g font-size="10"><text x="30" y="56">AC</text><text x="53" y="56">⁺⁄₋</text><text x="74" y="56">%</text><text x="33" y="73">7</text><text x="54" y="73">8</text><text x="75" y="73">9</text><text x="33" y="90">4</text><text x="54" y="90">5</text><text x="75" y="90">6</text><text x="33" y="107">1</text><text x="54" y="107">2</text><text x="75" y="107">3</text><text x="33" y="123">0</text></g><g font-size="12" fill="#ffd9ae"><text x="96" y="57">÷</text><text x="96" y="74">×</text><text x="96" y="91">−</text><text x="96" y="107">+</text><text x="96" y="124">=</text></g></g></g></svg>
<svg class="app" viewBox="0 0 134 158"><path d="M100 30h8v18h-8z" fill="#dfe6ea"/><path d="M102 48h9v20h-9z" fill="#5db4e8"/><path d="M104 68h10v22h-10z" fill="#63c558"/><path d="M106 90h12v22h-12z" fill="#f0b429"/><g transform="rotate(-6 67 75)"><rect x="22" y="22" width="84" height="108" rx="4" fill="#a88448"/><rect x="22" y="22" width="6" height="108" fill="#8b6a34"/><circle cx="66" cy="70" r="27" fill="none" stroke="#8f6d35" stroke-width="2"/><path d="M50 84q-6-24 8-30 12 2 8 30zM68 84q-4-28 10-30 12 6 6 30z" fill="#8f6d35"/></g></svg>
<svg class="app" viewBox="0 0 134 158"><circle cx="69" cy="75" r="55" fill="#65d46e"/><g fill="none" stroke="#161616" stroke-linecap="round"><path d="M37 56q36-11 65 7" stroke-width="12"/><path d="M40 76q32-9 56 7" stroke-width="10"/><path d="M43 95q27-7 47 6" stroke-width="8"/></g><circle cx="67" cy="150" r="4" class="run"/></svg>
<svg class="app" viewBox="0 0 134 158"><rect x="25" y="27" width="90" height="70" fill="#8f1c22" stroke="#f0f0f0" stroke-width="3"/><g transform="rotate(-8 60 80)"><rect x="14" y="40" width="92" height="78" fill="#f2f2f2"/><path d="M18 44h40v33H18zM62 44h40v33H62zM18 81h40v33H18zM62 81h40v33H62z" fill="#9b1f26"/><g fill="#241a18"><path d="M28 77V56q10-14 20 0v21zM72 77V56q10-14 20 0v21zM28 114V93q10-14 20 0v21z"/></g><g fill="#d9a58b"><circle cx="38" cy="62" r="7"/><circle cx="82" cy="62" r="7"/><circle cx="38" cy="99" r="7"/></g></g><circle cx="98" cy="95" r="26" fill="#4b4b4d"/><circle cx="98" cy="95" r="16" fill="#2c2c30"/><circle cx="98" cy="95" r="9" fill="#4d4a8e"/><circle cx="96" cy="97" r="4" fill="#4b8a68"/></svg>
<svg class="app" viewBox="0 0 134 158"><g transform="rotate(-6 67 75)"><rect x="18" y="26" width="96" height="98" rx="5" fill="#fff"/><path d="M18 38v-8q0-4 4-4h88q4 0 4 4v8z" fill="#d9d9dc"/><circle cx="25" cy="34" r="3.500" fill="#ee5b54"/><circle cx="35" cy="34" r="3.500" fill="#f5bd30"/><circle cx="45" cy="34" r="3.500" fill="#4cc044"/><path d="M38 64V52h14M82 52h14v12M96 96v12H82M52 108H38V96" fill="none" stroke="#3c3c3e" stroke-width="5"/><path d="M50 70h8l4-5h12l4 5h6v24H50z" fill="#444446"/><circle cx="67" cy="81" r="6.500" fill="none" stroke="#fff" stroke-width="2.500"/></g></svg>
<svg class="app" viewBox="0 0 134 158"><circle cx="67" cy="75" r="55" fill="#dfe3e8"/><circle cx="67" cy="75" r="51" fill="url(#gStore)"/><g stroke="#f4f6f8" stroke-width="9" stroke-linecap="round"><path d="M72 42L44 90M60 42l34 56M36 84h36M88 84h12M42 98l-3 5"/></g></svg>
<svg class="app" viewBox="0 0 134 158"><circle cx="67" cy="75" r="62.500" fill="#0b0b1c"/><path d="M34 108a46 46 0 1 1 66 0" fill="none" stroke="#fff" stroke-width="10"/><path d="M86 51l5 5-18 28q-5 3-9-3z" fill="#fff"/></svg>
<svg class="app" viewBox="0 0 134 158"><path d="M26 28h20v26H26z" fill="#b98748"/><path d="M32 26h30v30H32z" fill="#f1f1f1"/><path d="M72 22h38l4 30H66z" fill="#1f1f20"/><path d="M36 50l50-20 6 10-50 22z" fill="#bb8a4f"/><path d="M40 28l6-4 2 34h-8z" fill="#efc232"/><path d="M44 16l34 38" stroke="#c8321e" stroke-width="3"/><circle cx="84" cy="33" r="4" fill="#ccc"/><path d="M94 44v-10l6-2v9" fill="none" stroke="#fff" stroke-width="2"/><path d="M22 50q12 6 24 3t24 2 24-2 20-2l1 70q0 4-4 4H26q-4 0-4-4z" fill="#cfa566"/><path d="M104 54l10-2 1 72h-8z" fill="#b08443"/><g fill="none" stroke="#9b7439" stroke-width="9"><path d="M54 76l10-12 12 12M84 84l6 14-14 10M62 108H50l0-16"/></g></svg>
<svg class="app" viewBox="0 0 134 158"><path d="M12 49h114v13l-4 3 4 3v33H12V68l4-3-4-3z" fill="#55b34a"/><path d="M20 55h96v28H20z" fill="none" stroke="#eef4ee" stroke-width="4" stroke-dasharray="3 3"/><path d="M25 54h13v28H25zM50 54h13v28H50zM75 54h13v28H75zM100 54h13v28h-13z" fill="#1d2020"/><path d="M30 91h76v10H30z" fill="#e8c53c"/><path d="M36 91v10M42 91v10M48 91v10M54 91v10M60 91v10M66 91v10M72 91v10M78 91v10M84 91v10M90 91v10M96 91v10M102 91v10" stroke="#8f7b23"/><circle cx="19" cy="93" r="4" fill="#1d2020"/><circle cx="117" cy="93" r="4" fill="#1d2020"/></svg>
<svg class="app" viewBox="0 0 134 158"><circle cx="67" cy="75" r="55" fill="#fff"/><circle cx="67" cy="75" r="50" fill="#1f4f72"/><path d="M17 75a50 50 0 0 1 83-38q-14-2-12 14L40 95q-16-2-14 10Q17 92 17 75z" fill="#55b8e8"/><circle cx="67" cy="75" r="33" fill="#82bb55"/><path d="M42 96a33 33 0 0 1 45-54q2 40-26 53-10 4-19 1z" fill="#fff"/></svg>
<svg class="app" viewBox="0 0 134 158"><path d="M13 130l9-31a54 55 0 1 1 22 25z" fill="#f1f1f1"/><path d="M27 116l4-17a46 46 0 1 1 17 16z" fill="url(#gWa)"/><path d="M43 50q8-5 10 2l4 10q0 3-6 7 8 18 22 22l7-8q8 2 14 6 4 14-12 17-28-2-42-34-5-14 3-22z" fill="#f4f4f4"/><circle cx="67" cy="150" r="4" class="run"/></svg>
<svg class="app" viewBox="0 0 134 158"><rect x="14" y="27" width="107" height="94" rx="3" fill="#050607" stroke="#9aa4a4" stroke-width="1.500"/><rect x="24" y="36" width="90" height="77" fill="#12211e"/><path d="M24 52h90M24 74h90M24 96h90M37 36v77M59 36v77M81 36v77M103 36v77" stroke="#4c8476" stroke-width="1"/><path d="M24 81h16l5-6 5 6h6l5-38 5 50 4-12h8l7-10 8 8 6-5 6 6h8" fill="none" stroke="#8ad6c0" stroke-width="2"/></svg>
<svg class="app" viewBox="0 0 134 158"><circle cx="67" cy="75" r="55" fill="#e7eef2"/><circle cx="67" cy="75" r="51" fill="url(#gSilver)"/><path d="M100 41q-24 2-42 26-16-1-28 13l20 1 8 10 6 22q16-14 14-28 20-18 22-44z" fill="#4b5054"/><path d="M44 92q-10 4-10 16 12-2 16-10z" fill="#4b5054"/><circle cx="79" cy="63" r="7" fill="#b4bcc1"/></svg>
<svg class="app" viewBox="0 0 134 158"><rect x="13" y="24" width="108" height="102" rx="4" fill="url(#gSilver)"/><circle cx="67" cy="75" r="45" fill="#242424"/><circle cx="67" cy="75" r="37" fill="none" stroke="#b9b7b2" stroke-width="7" stroke-dasharray="4 3.260"/><circle cx="67" cy="75" r="31" fill="none" stroke="#b9b7b2" stroke-width="7"/><path d="M67 75h30M67 75L52 49M67 75l-15 26" stroke="#b9b7b2" stroke-width="6"/><circle cx="67" cy="75" r="6" fill="#8e8c88"/></svg>
<i class="split"></i>
<svg class="app" viewBox="0 0 134 158"><path d="M9 50V32q0-3 3-3h30q4 0 5 9h74q5 0 5 5v20H9z" fill="#54809e"/><rect x="9" y="43" width="117" height="78" rx="4" fill="url(#gFolder)"/><path d="M9 111h117M9 115h117" stroke="#5f9cc6"/><circle cx="67" cy="79" r="26" fill="#5590bf"/><path d="M61 64h12v16h9L67 97 52 80h9z" fill="#79b1da"/></svg>
<svg class="app" viewBox="0 0 134 158"><path d="M22 31l11 88q2 12 34 12t33-12l11-88z" fill="url(#gBin)"/><ellipse cx="67" cy="31" rx="44.500" ry="10.500" fill="#2d2d2e" stroke="#6d7072" stroke-width="1.500"/><path d="M34 116q6 12 20 14-14-10-16-22z" fill="#8a9196" opacity=".7"/></svg>
</div>
</body>
</html>
```
FILE: styles.css
```css
/* 1rem = 10 design pixels of the 5120 x 2880 desktop */
html { font-size: 8px; }
* { box-sizing: border-box; }
body { margin: 0; width: 512rem; height: 288rem; display: flex; flex-direction: column; overflow: hidden; position: relative; background: #1b1211; font-family: "Liberation Sans", Arial, sans-serif; font-size: 3.2rem; color: #000; }
svg { display: block; flex: none; }
h1, h2, p { margin: 0; }
em, i { font-style: normal; }
.i18 { width: 1.8rem; height: 2.8rem; } .i28 { width: 2.8rem; height: 2.8rem; } .i30 { width: 3rem; height: 3rem; }
.i32 { width: 3.2rem; height: 3.2rem; } .i36 { width: 3.6rem; height: 2.2rem; } .i38 { width: 3.8rem; height: 3.4rem; } .i40 { width: 4rem; height: 3.2rem; }

.menubar { flex: none; height: 4.6rem; border-bottom: .1rem solid #000; display: flex; justify-content: space-between; color: #fff; font: 500 2.7rem/4.3rem Inter, sans-serif; white-space: nowrap; letter-spacing: -.03em;
  background: linear-gradient(90deg, #483f41, #54433f 8%, #4c4243 22%, #44404e 37%, #4b4144 45%, #4f4245 51%, #443f48 58%, #353a4b 68%, #2c3246 84%, #262e45); }
.menus, .status { display: grid; align-items: center; }
.menus { padding-left: 4.3rem; grid-template-columns: 6.6rem 13.2rem 8.2rem 8.6rem 9.9rem 13rem 18.2rem 10.5rem 14rem auto; }
.menus b { font-weight: 700; }
.apple { width: 2.5rem; height: 3rem; margin-top: -.6rem; }
.status { padding-right: 4.6rem; grid-template-columns: 5.5rem 3.7rem 5.8rem 6.1rem 8rem 6.4rem 6.4rem 5.6rem 6.1rem 6.3rem 6.9rem 7.6rem 7.2rem 35.3rem 31.1rem 6rem 3.6rem; }
.kh { font: 4.6rem/4.2rem Roboto, sans-serif; letter-spacing: 0; }
.kh b { color: #7b62c9; font-weight: 700; } .kh i { color: #8b93ab; font-weight: 300; }
.cloud { width: 4.2rem; height: 2.8rem; } .batt { width: 4.6rem; height: 2.6rem; }
.pct { font-size: 2.5rem; letter-spacing: -.04em; }

.window { flex: none; height: 267.2rem; position: relative; border-radius: 1rem; overflow: hidden; background: #7f7f7f; }
.chrome { height: 19.2rem; position: relative; border-bottom: .2rem solid #3a3a36; overflow: hidden;
  background: radial-gradient(ellipse 62rem 11rem at 497rem 0, #161a10 20%, rgba(30,34,24,.7) 60%, rgba(30,34,24,0)),
  linear-gradient(90deg, #737373, #6b6b6b 35%, #636361 50%, #585856 58%, #57564f 64%, #434339 68%, #5f5f5d 73%, #76756b 80%, #858373 85%, #6d6d64 92%, #5c5e56); }
.scratches { position: absolute; right: 0; top: 0; width: 240rem; height: 19.2rem; }
.tabstrip { position: relative; height: 6.6rem; display: flex; align-items: stretch; }
.lights { width: 21.1rem; padding-left: 2.6rem; display: flex; align-items: center; gap: 1.6rem; border-bottom: .2rem solid rgba(0,0,0,.3); }
.lights i { width: 2.4rem; height: 2.4rem; border-radius: 50%; border: .1rem solid rgba(0,0,0,.15); }
.red { background: #fd5f57; } .amber { background: #fdbc2e; } .green { background: #29c940; }
.tab { width: 45rem; padding: .2rem 2.5rem 0 1.9rem; display: flex; align-items: center; border-left: .1rem solid rgba(255,255,255,.45); border-bottom: .2rem solid rgba(0,0,0,.3); color: #dcdcdc; font: 500 2.2rem/3rem Inter, sans-serif; letter-spacing: -.008em; text-shadow: 0 .2rem .3rem rgba(0,0,0,.6); }
.tab span { flex: 1; min-width: 0; margin: .3rem .8rem 0 1rem; white-space: nowrap; height: 3.2rem; }
.tab .fade { letter-spacing: -.02em; margin-right: 0; -webkit-mask-image: linear-gradient(90deg, #000 86%, rgba(0,0,0,.15)); mask-image: linear-gradient(90deg, #000 86%, rgba(0,0,0,.15)); }
.tab .x { width: 2rem; height: 2rem; } .x path { fill: none; stroke: #fff; stroke-width: 3; }
.tab.active { background: rgba(255,255,255,.4); border-left: 0; border-bottom: 0; border-top: .4rem solid #fff; color: #fff; padding-top: 0; padding-bottom: .3rem; margin-left: .1rem; width: 44.9rem; }
.k1 { font: 700 15px "Liberation Sans", sans-serif; fill: #67308f; } .k2 { font: 7px "Liberation Sans", sans-serif; fill: #67308f; }
.kipu { text-shadow: none; letter-spacing: 0; }
.plus { width: 2.8rem; height: 2.8rem; margin: 1.8rem 0 0 1.9rem; }
.tabstrip::after { content: ""; position: absolute; left: 291rem; right: 0; bottom: 0; height: .2rem; background: rgba(0,0,0,.3); }
.toolbar { position: relative; height: 8rem; display: flex; align-items: center; padding-left: .6rem; background: rgba(255,255,255,.4); }
.back { width: 6.8rem; height: 6.8rem; border-radius: 50%; border: .2rem solid rgba(90,90,90,.6); background: rgba(255,255,255,.1); display: flex; align-items: center; justify-content: center; }
.fwd { margin-left: 1.6rem; } .reload { margin-left: 3.4rem; } .home { margin-left: 2.9rem; }
.url { margin-left: 25.2rem; width: 372.4rem; height: 6rem; border: .2rem solid rgba(90,90,90,.7); border-radius: .8rem; background: rgba(255,255,255,.76); display: flex; align-items: center; padding: .1rem 1.1rem 0 1.7rem; font: 400 2.8rem/5.6rem Inter, sans-serif; letter-spacing: -.02em; background-clip: padding-box; }
.url span { flex: 1; margin-left: 2.2rem; color: #111; } .url em { color: #737373; }
.dots { fill: #555; } .pocket { margin-left: 2.5rem; } .star { margin-left: 2.4rem; }
.addons { margin-left: 25.2rem; display: flex; gap: 3.22rem; }
.bar { width: .2rem; height: 6.8rem; margin-left: 2rem; background: rgba(255,255,255,.25); }
.burger { width: 2.5rem; height: 2.4rem; margin-left: 2.5rem; }
.bookmarks { position: relative; height: 4.4rem; background: rgba(255,255,255,.4); padding-left: 2.4rem; display: grid; grid-template-columns: 15.9rem 20.9rem 11.1rem 16rem 14.5rem 14.9rem 18.8rem 16.1rem auto; justify-content: start; align-items: center; color: #fff; font: 500 2.2rem/3.4rem Inter, sans-serif; letter-spacing: -.012em; text-shadow: 0 .2rem .3rem rgba(0,0,0,.65); }
.bookmarks span { display: flex; align-items: center; gap: .8rem; white-space: nowrap; } .bookmarks .i32 { height: 2.8rem; }
.bookmarks .kipu { height: 3.2rem; }
.fold { fill: rgba(255,255,255,.2); stroke: #fff; stroke-width: 2.4; }

.page { height: 248rem; position: relative; background: linear-gradient(#7f7f7f 0, #7f7f7f 94%, #767676); }
.profiler { position: absolute; left: 0; top: 0; width: 15.9rem; height: 4rem; padding-left: 1.6rem; background: #fff; border-radius: 0 0 1.6rem 0; box-shadow: .1rem .2rem .2rem rgba(0,0,0,.5); font: 2.3rem/4rem "DejaVu Sans Mono", monospace; white-space: nowrap; color: #111; }
.profiler span { color: #aaa; }
.masthead { height: 22.4rem; padding: 3.6rem 2.2rem 0 0; background: #454545; display: grid; grid-template-columns: 1fr auto; grid-template-rows: 10.8rem 8rem; }
.locations { margin-left: 4rem; width: 52rem; height: 6rem; border: .2rem solid #66728a; background: #7f7f7f; padding: 0 .9rem; font-weight: 700; line-height: 6rem; display: flex; justify-content: space-between; align-items: center; }
.chev { width: 3rem; height: 1.9rem; }
.account { margin-top: -2.3rem; display: flex; color: #8a8a8a; font-size: 2.8rem; line-height: 3rem; height: 3rem; }
.account span + span { margin-left: 4.5rem; } .account span:nth-child(3) { margin-left: 4.8rem; } .account span:last-child { margin-left: 3rem; }
.nav { grid-column: 1 / 3; padding-left: 4rem; display: grid; grid-template-columns: 24.5rem 20.4rem 27.5rem 25.3rem 16.2rem 22.6rem 36.8rem 20.5rem auto; justify-content: start; color: #858585; font-size: 4.42rem; line-height: 8.2rem; white-space: nowrap; }
.nav span { display: flex; align-items: center; }
.nav .on { width: 17.5rem; height: 8rem; justify-content: center; color: #000; background: linear-gradient(#6d6d6d 50%, #646464 50%); }
.pill { width: 5.1rem; height: 3.6rem; margin: 1rem 0 0 .9rem; } .pill.wide { width: 5.6rem; }
.pill.dark { margin: 1.2rem 0 0 1.2rem; }

.patient { height: 36.5rem; display: flex; padding-left: 3rem; }
.facts { width: 131.1rem; padding-top: 4.1rem; white-space: nowrap; }
.facts h1 { font-size: 4.16rem; line-height: 4.6rem; height: 4.6rem; margin-bottom: .43rem; display: flex; white-space: pre; }
.name { letter-spacing: -.012rem; } .mr { letter-spacing: .055rem; }
.facts h1 em { color: #6e1b22; letter-spacing: -.01rem; }
.mars { width: 2.8rem; height: 4rem; margin: .3rem 1.1rem 0 1.2rem; } .phone { width: 3.6rem; height: 3.6rem; margin: .45rem 0 0 1rem; }
.facts p { line-height: 4.5rem; }
.facts .ur { line-height: 4.6rem; } .facts .tz { line-height: 3.3rem; padding-left: 14.1rem; letter-spacing: -.036rem; }
.codes { padding-top: 3.95rem; }
.diag { margin-left: .4rem; width: 110rem; height: 8.1rem; border: .2rem solid #666; padding: .2rem 0 0 .9rem; line-height: 3.9rem; white-space: nowrap; letter-spacing: .018rem; }
.files { margin-top: .4rem; width: 39.2rem; height: 5.1rem; border: .2rem solid #555; border-radius: .6rem; display: flex; justify-content: space-between; padding-left: 1.3rem; font-size: 2.88rem; line-height: 4.9rem; letter-spacing: .028rem; }
.files i { width: 3rem; border: .3rem outset #707070; display: flex; align-items: center; justify-content: center; } .files svg { width: 1.4rem; height: .9rem; }
.prints { margin-left: auto; padding: 3.9rem 2.9rem 0 0; display: flex; flex-direction: column; align-items: flex-end; }
.printer { width: 8.2rem; height: 4.5rem; } .docs { display: flex; gap: 2.3rem; margin-top: 1.9rem; } .docs svg { width: 6.7rem; height: 4.8rem; }
.dt { font-family: "Open Sans", sans-serif; font-size: 21px; fill: #636363; } .dt.sm { font-size: 16px; }

.tabs { padding-left: 3rem; font-size: 3.6rem; line-height: 5.8rem; }
.tabs div { display: grid; justify-content: start; column-gap: .9rem; height: 5.6rem; margin-bottom: .4rem; } .tabs div:last-child { margin-bottom: 0; }
.r1 { grid-template-columns: 23rem 19.1rem 35.7rem 17.4rem 42.8rem 34.9rem; letter-spacing: -.012rem; }
.r2 { grid-template-columns: 25.9rem 28.9rem 37.6rem 41.6rem 29.8rem 16.7rem; }
.r3 { grid-template-columns: 16.4rem 30.7rem 17.2rem 31.3rem 40.3rem 30.4rem; letter-spacing: -.025rem; }
.r4 { grid-template-columns: 30.6rem 45.2rem 35.2rem 20.8rem 10.7rem 17.6rem; letter-spacing: -.01rem; }
.r5 { grid-template-columns: 45rem 21.4rem 26.2rem 50.4rem 22.5rem 14rem; }
.r6 { grid-template-columns: 27.3rem 30.1rem; letter-spacing: .025rem; }
.tabs span { display: flex; align-items: center; justify-content: center; height: 5.6rem; white-space: nowrap; }
.tabs span, .tools, .up-btn { background: #667081; }
.tabs .sel { background: #7f7f7f; border: .4rem solid #667081; border-bottom: 0; line-height: 5.1rem; }

.panel { margin: 0 2.9rem 0 3rem; height: 62.4rem; border: .4rem solid #667081; padding: 0 1.5rem 1.5rem 1.6rem; display: flex; flex-direction: column; }
.phead { height: 7.8rem; display: flex; justify-content: space-between; padding-top: 1.5rem; }
.phead h2 { font-size: 3.52rem; line-height: 4.9rem; letter-spacing: -.01rem; }
.tools { width: 17.5rem; height: 6.2rem; display: flex; align-items: center; justify-content: space-around; } .tools svg { width: 2.8rem; height: 2.8rem; }
.actions { height: 10rem; display: flex; align-items: center; padding-left: 2.4rem; }
.larr { width: 2.9rem; height: 2rem; margin: .6rem 1rem 0 .1rem; }
.actions span { padding-top: .1rem; }
.add { margin-left: 4.6rem; width: 24rem; height: 6.2rem; border: .3rem solid #666; border-bottom-width: .5rem; border-radius: 3rem; background: linear-gradient(#6d6d6d, #858585); display: flex; align-items: center; gap: 1.4rem; padding: .2rem 0 0 1.2rem; font-weight: 700; white-space: nowrap; } .add svg { width: 3.2rem; height: 3.2rem; }
.grid { margin-top: 1rem; width: 156.9rem; }
.row { height: 7.69rem; border-bottom: .25rem solid #667081; display: grid; grid-template-columns: 87.8rem 9.1rem 32.8rem 10.1rem 8.9rem auto; justify-content: start; align-items: center; font-size: 2.56rem; white-space: nowrap; }
.row .n { font-size: 3.2rem; letter-spacing: .01rem; padding-top: .15rem; }
.row.head { height: 4.4rem; font-weight: 700; grid-template-columns: 87.8rem 15.8rem 14.2rem auto; } .row.head .n { font-size: 2.56rem; text-align: center; padding: 0 1.3rem 0 0; letter-spacing: 0; }
.tags { display: flex; gap: .8rem; padding-top: .7rem; } .tags.up { padding: 0 0 .4rem; }
.tags b { height: 2.8rem; padding: 0 .5rem; background: #1f2a4b; color: #909090; font-size: 2.05rem; line-height: 3rem; }
.del { width: 3.7rem; height: 3.8rem; margin-top: -1.3rem; } .pencil { width: 3.4rem; height: 4rem; margin-top: -1.2rem; }
.pfoot { margin-top: auto; display: flex; justify-content: flex-end; }
.up-btn { width: 9.2rem; height: 6.1rem; display: flex; align-items: center; justify-content: center; } .up-btn svg { width: 2.2rem; height: 2.6rem; }

.modal { position: absolute; left: 191.1rem; top: 44.8rem; width: 129.8rem; height: 37.5rem; background: #fff; border: .2rem solid #c9c9c9; border-radius: 1.1rem; box-shadow: 0 1.4rem 3.4rem rgba(0,0,0,.5); overflow: hidden; background-clip: padding-box; display: flex; flex-direction: column; }
.mh { height: 11.1rem; background: #fafafa; border-bottom: .2rem solid #e2e2e2; padding: 0 6.7rem 0 4.8rem; display: flex; justify-content: space-between; color: #333; font-size: 3.6rem; line-height: 11.7rem; letter-spacing: -.012rem; }
.mh svg { width: 1.8rem; height: 1.6rem; margin-top: 3.2rem; }
.mb { height: 11.4rem; border-bottom: .2rem solid #e2e2e2; padding-left: 8rem; line-height: 9.5rem; }
.mf { display: flex; justify-content: flex-end; gap: 11.3rem; padding: 2.2rem 6.7rem 0 0; font-size: 2.8rem; line-height: 10.8rem; } .ok { color: #3498db; }

.dock { position: absolute; left: 11.5rem; top: 272.2rem; width: 489rem; height: 15.8rem; border: .2rem solid #4a4443; border-bottom: 0; border-radius: 1rem 1rem 0 0; background: linear-gradient(#241c1b, #30231f); display: flex; padding-left: .5rem; }
.dock .app { width: 13.376rem; height: 15.8rem; margin-top: -.2rem; } .run { fill: #b5a9a8; } .defs { position: absolute; }
.split { width: .2rem; height: 11.8rem; margin: 2rem 2.9rem 0 3.1rem; background: #6a605f; }
body::after { content: ""; position: absolute; left: 0; right: 0; top: 271.8rem; height: 1.4rem; background: #000; z-index: -1; }
```
